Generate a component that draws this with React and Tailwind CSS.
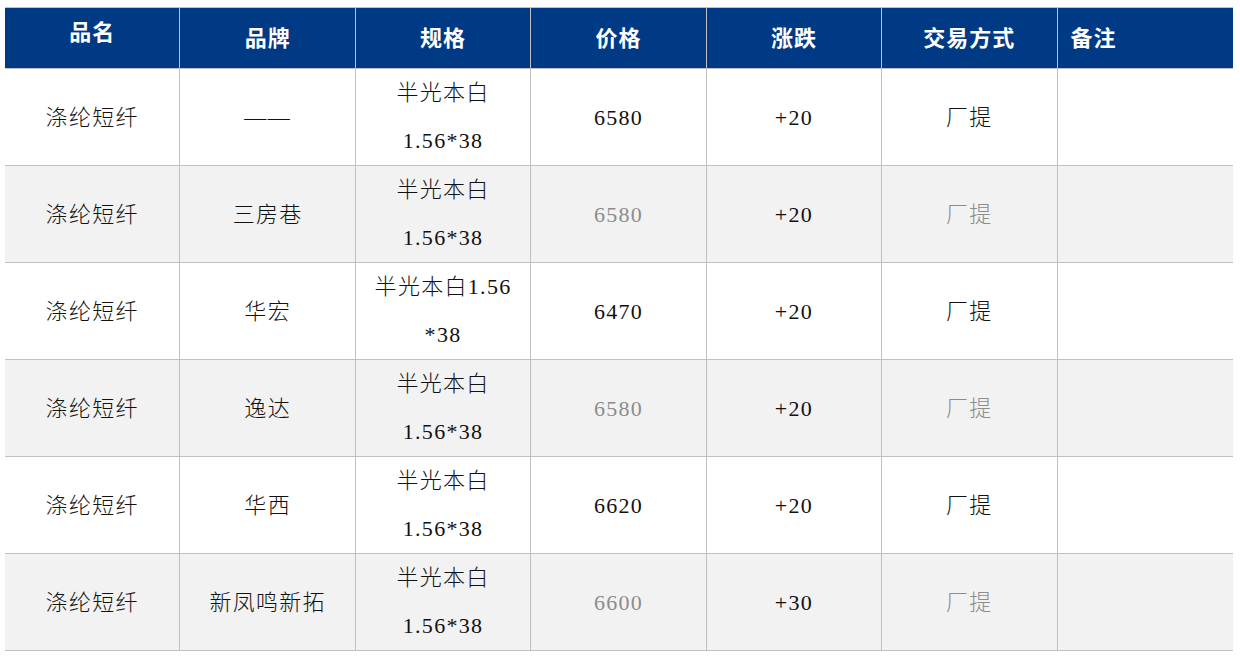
import React from "react";

const rows = [
  { brand: "——", spec: ["半光本白", "1.56*38"], price: "6580", chg: "+20", gray: false },
  { brand: "三房巷", spec: ["半光本白", "1.56*38"], price: "6580", chg: "+20", gray: true },
  { brand: "华宏", spec: ["半光本白1.56", "*38"], price: "6470", chg: "+20", gray: false },
  { brand: "逸达", spec: ["半光本白", "1.56*38"], price: "6580", chg: "+20", gray: true },
  { brand: "华西", spec: ["半光本白", "1.56*38"], price: "6620", chg: "+20", gray: false },
  { brand: "新凤鸣新拓", spec: ["半光本白", "1.56*38"], price: "6600", chg: "+30", gray: true },
];

const font = { fontFamily: '"Liberation Serif", "Noto Sans CJK SC", serif' };

export default function App() {
  return (
    <div className="w-[1240px] h-[656px] bg-white pt-[7px] pl-[5px]" style={font}>
      <div className="w-[1228px] border-t border-[#c0c0c0]">
        <div className="grid grid-cols-7 h-[61px] bg-[#003a85] border-b border-[#c0c0c0] text-white font-bold text-[22px] tracking-[1px]">
          <div className="border-r border-[#c0c0c0] flex items-center justify-center pb-[11px]">品名</div>
          <div className="border-r border-[#c0c0c0] flex items-center justify-center">品牌</div>
          <div className="border-r border-[#c0c0c0] flex items-center justify-center">规格</div>
          <div className="border-r border-[#c0c0c0] flex items-center justify-center">价格</div>
          <div className="border-r border-[#c0c0c0] flex items-center justify-center">涨跌</div>
          <div className="border-r border-[#c0c0c0] flex items-center justify-center">交易方式</div>
          <div className="flex items-center pl-[13px]">备注</div>
        </div>
        {rows.map((r, i) => (
          <div
            key={i}
            className={
              "grid grid-cols-7 h-[97px] border-b border-[#c0c0c0] text-[22px] tracking-[1.3px] font-light text-[#111] " +
              (r.gray ? "bg-[#f2f2f2]" : "bg-white")
            }
          >
            <div className="border-r border-[#c0c0c0] flex items-center justify-center">涤纶短纤</div>
            <div className="border-r border-[#c0c0c0] flex items-center justify-center">{r.brand}</div>
            <div className="border-r border-[#c0c0c0] flex flex-col items-center justify-center leading-[48px]">
              <span>{r.spec[0]}</span>
              <span>{r.spec[1]}</span>
            </div>
            <div className={"border-r border-[#c0c0c0] flex items-center justify-center " + (r.gray ? "text-[#8c8c8c]" : "")}>
              {r.price}
            </div>
            <div className="border-r border-[#c0c0c0] flex items-center justify-center">{r.chg}</div>
            <div className={"border-r border-[#c0c0c0] flex items-center justify-center " + (r.gray ? "text-[#8c8c8c]" : "")}>
              厂提
            </div>
            <div></div>
          </div>
        ))}
      </div>
    </div>
  );
}
